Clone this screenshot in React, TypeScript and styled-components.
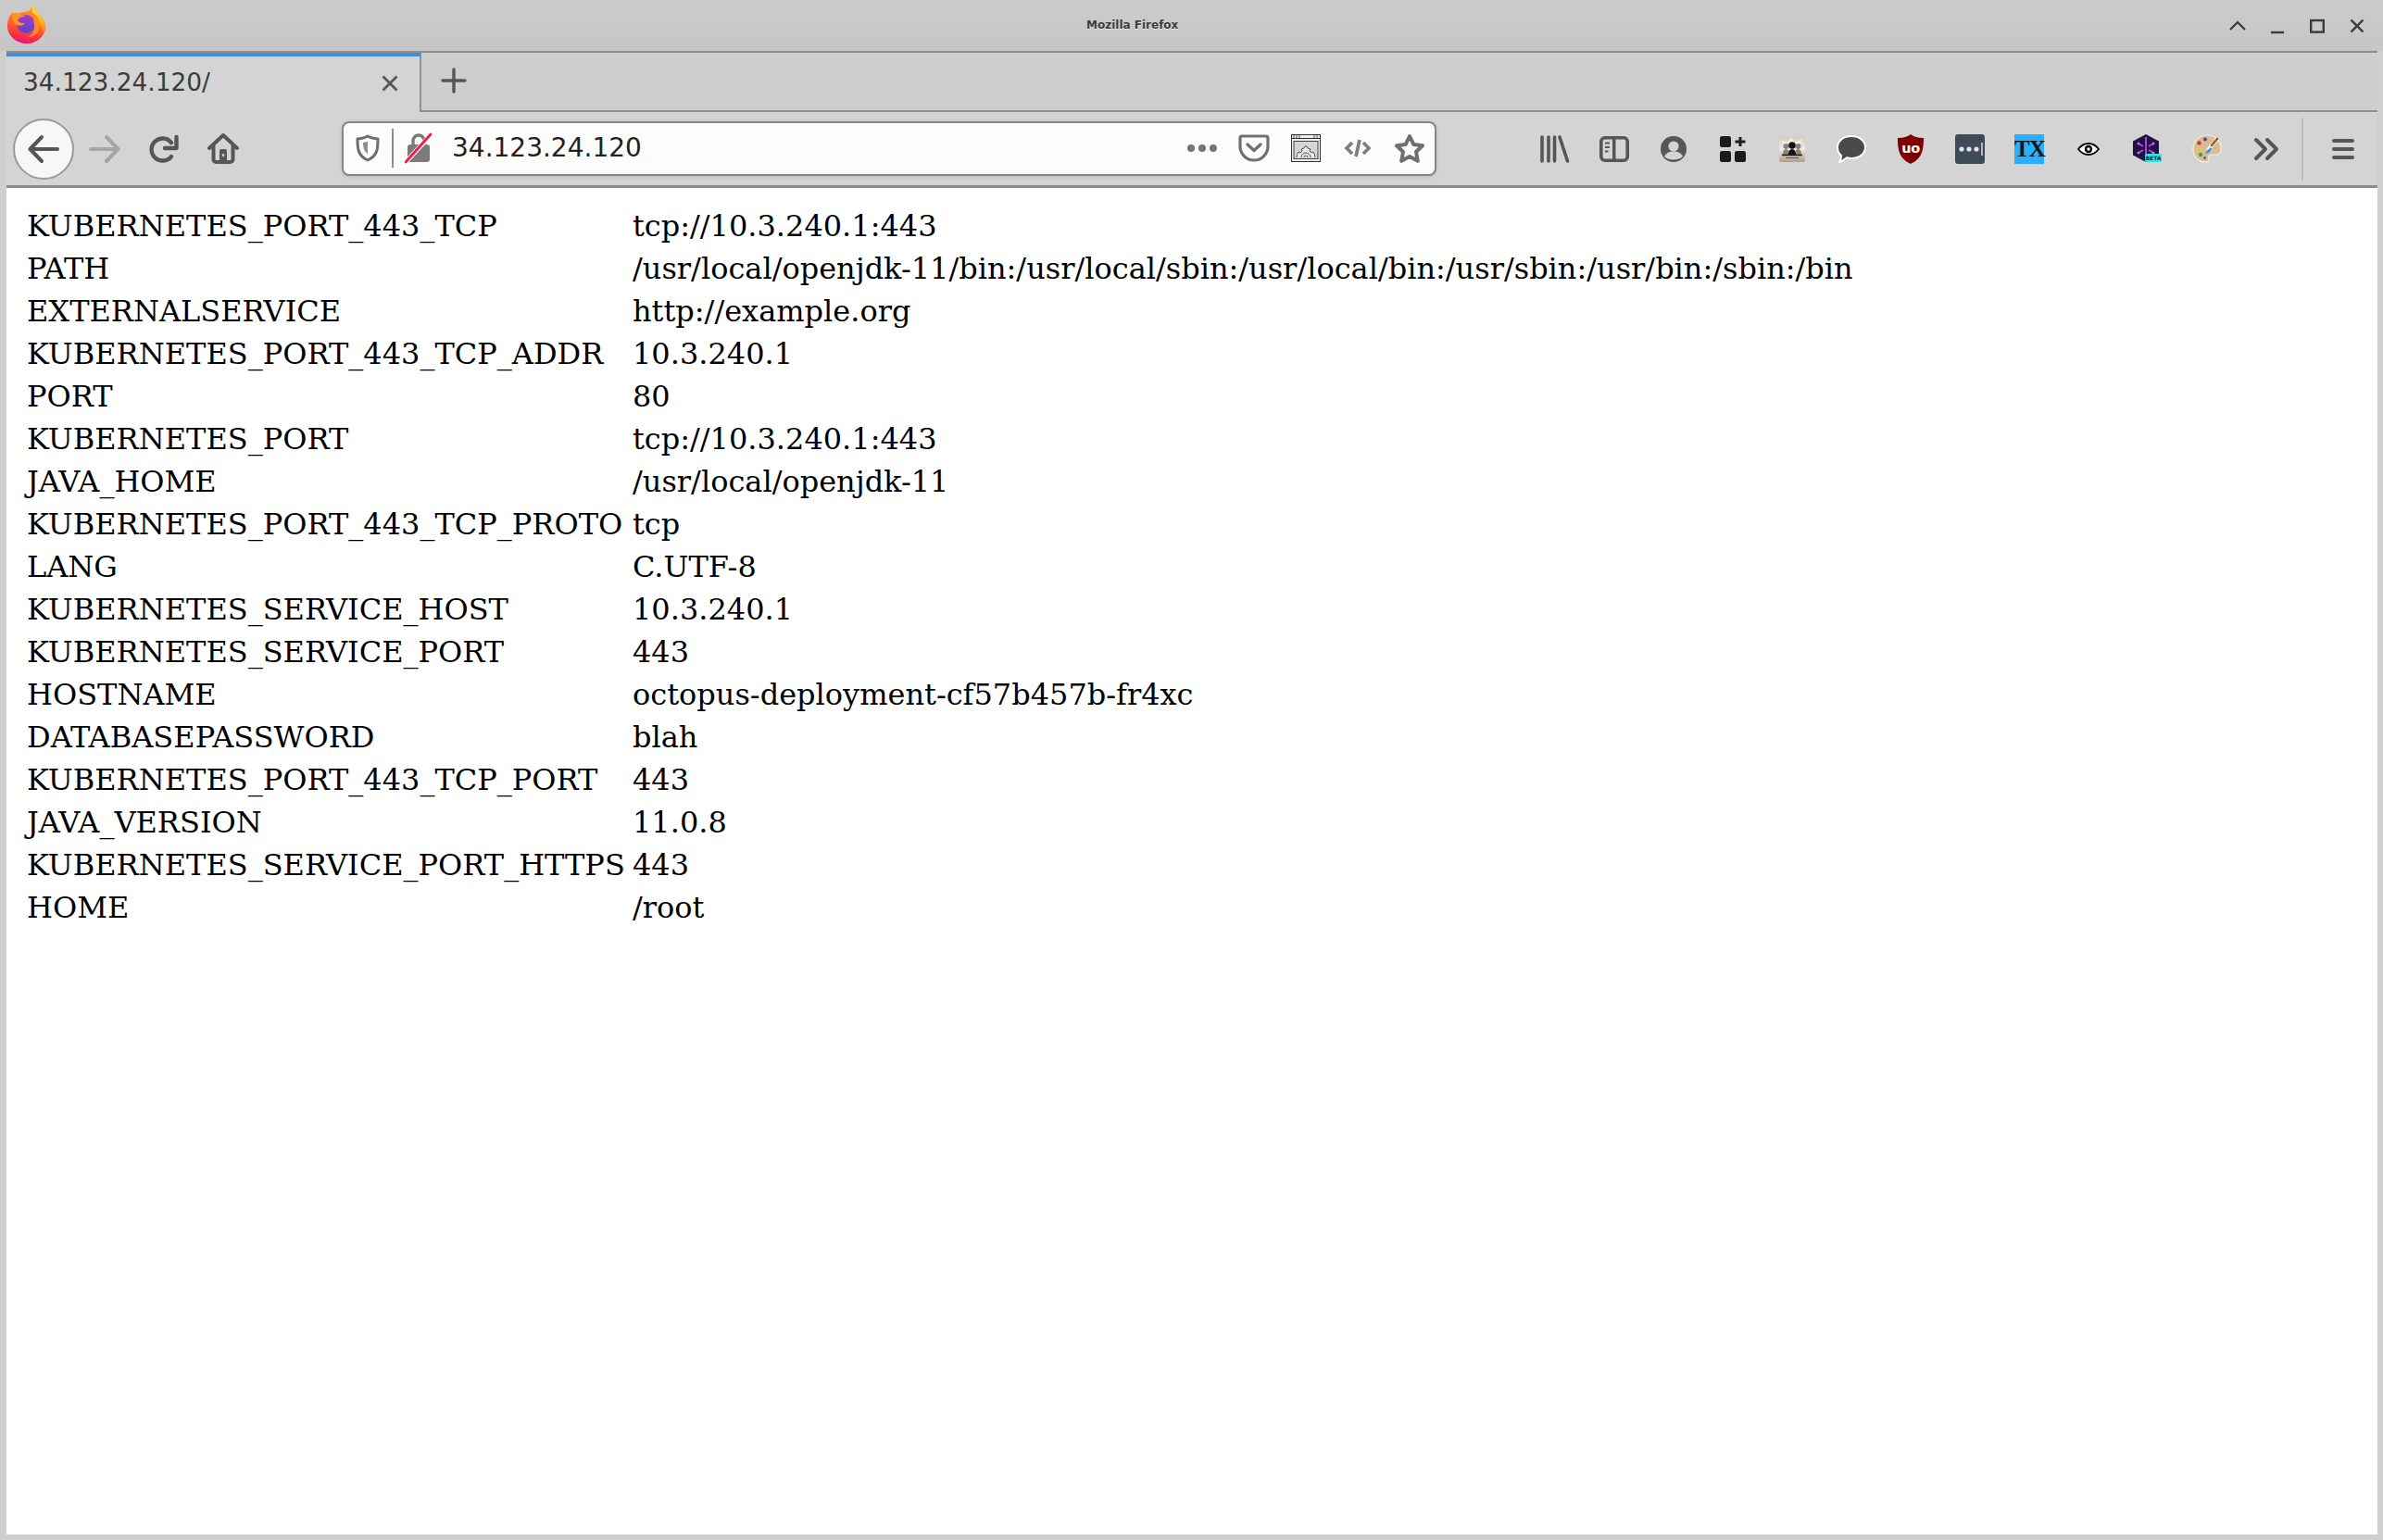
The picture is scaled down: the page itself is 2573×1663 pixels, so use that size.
import React from "react";
import styled, { createGlobalStyle } from "styled-components";

const GlobalStyle = createGlobalStyle`
  html, body { margin: 0; padding: 0; }
  body { background: #cfcfcf; }
  #root { width: 2573px; height: 1663px; overflow: hidden; }
`;

const Window = styled.div`
  width: 2573px;
  height: 1663px;
  display: flex;
  flex-direction: column;
  background: #cfcfcf;
  font-family: "DejaVu Sans", sans-serif;
`;

const TitleBar = styled.header`
  height: 55px;
  flex: none;
  display: grid;
  grid-template-columns: 1173px auto 1fr;
  align-items: center;
  background: linear-gradient(#cbcbcb, #c6c6c6);
`;

const LogoSlot = styled.div`
  display: flex;
  align-items: center;
  padding: 0 0 4px 8px;
`;

const WindowTitle = styled.div`
  font-size: 12px;
  font-weight: 700;
  color: #3c3c3c;
  text-shadow: 0 1px 0 #e8e8e8;
  padding-bottom: 1px;
`;

const WindowControls = styled.div`
  display: flex;
  justify-content: flex-end;
  padding-right: 7px;
`;

const WindowButton = styled.div`
  width: 43px;
  height: 44px;
  display: flex;
  align-items: center;
  justify-content: center;
  svg { width: 18px; height: 18px; }
`;

const Chrome = styled.div`
  flex: none;
  margin: 0 6px 0 7px;
`;

const TabStrip = styled.div`
  height: 66px;
  display: flex;
  background: #cecece;
  border-top: 2px solid #8e8e8e;
  box-sizing: border-box;
`;

const Tab = styled.div`
  width: 448px;
  flex: none;
  box-sizing: border-box;
  display: flex;
  align-items: center;
  justify-content: space-between;
  padding: 0 22px 2px 18px;
  background: #d4d4d4;
  border-top: 4px solid #3f8ce0;
  border-right: 2px solid #919191;
  font-size: 26.4px;
  color: #3b3b3b;
`;

const TabLabel = styled.span`
  padding-bottom: 4px;
`;

const TabSpace = styled.div`
  flex: 1;
  display: flex;
  align-items: center;
  padding: 0 0 2px 21px;
  border-bottom: 2px solid #919191;
`;

const Toolbar = styled.div`
  height: 82px;
  box-sizing: border-box;
  display: flex;
  align-items: center;
  background: #d4d4d4;
  border-bottom: 3px solid #8b8b8b;
`;

const NavGroup = styled.div`
  display: flex;
  align-items: center;
  width: 362px;
  flex: none;
  padding-left: 7px;
  box-sizing: border-box;
`;

const BackButton = styled.div`
  width: 66px;
  height: 66px;
  flex: none;
  box-sizing: border-box;
  border-radius: 50%;
  border: 2px solid #9a9a9a;
  background: #f7f7f7;
  display: flex;
  align-items: center;
  justify-content: center;
  margin-right: 1px;
`;

const NavButton = styled.div`
  width: 64px;
  height: 64px;
  flex: none;
  display: flex;
  align-items: center;
  justify-content: center;
`;

const UrlBar = styled.div`
  width: 1182px;
  height: 59px;
  flex: none;
  box-sizing: border-box;
  display: flex;
  align-items: center;
  background: #fcfcfc;
  border: 2px solid #858585;
  border-radius: 8px;
  box-shadow: 0 1px 4px rgba(0, 0, 0, 0.12);
  margin-top: -1px;
  padding-left: 13px;
`;

const UrlDivider = styled.div`
  width: 2px;
  height: 42px;
  background: #8c8c8c;
  margin: 0 12px 0 13px;
  flex: none;
`;

const UrlText = styled.div`
  flex: 1;
  padding-left: 21px;
  font-size: 28px;
  color: #222;
  line-height: 1;
`;

const UrlActions = styled.div`
  display: flex;
  align-items: center;
  margin-right: -1px;
`;

const UrlAction = styled.div`
  width: 56px;
  height: 40px;
  display: flex;
  align-items: center;
  justify-content: center;
`;

const ToolIcons = styled.div`
  display: flex;
  align-items: center;
  padding-left: 96px;
`;

const ToolIcon = styled.div`
  width: 64px;
  height: 64px;
  flex: none;
  display: flex;
  align-items: center;
  justify-content: center;
`;

const ToolDivider = styled.div`
  width: 2px;
  height: 68px;
  margin: 0 11px 0 6px;
  background: #bdbdbd;
  flex: none;
`;

const Page = styled.main`
  flex: 1;
  margin: 0 6px 6px 7px;
  padding: 18px 0 0 22px;
  background: #fff;
`;

const EnvTable = styled.table`
  border-collapse: collapse;
  table-layout: fixed;
  width: 2000px;
  font-family: "DejaVu Serif", serif;
  font-size: 32px;
  color: #000;
`;

const KeyCell = styled.td`
  width: 654px;
  height: 46px;
  padding: 0;
  white-space: nowrap;
  line-height: 46px;
`;

const ValueCell = styled.td`
  height: 46px;
  padding: 0;
  white-space: nowrap;
  line-height: 46px;
`;

const rows: [string, string][] = [
  ["KUBERNETES_PORT_443_TCP", "tcp://10.3.240.1:443"],
  ["PATH", "/usr/local/openjdk-11/bin:/usr/local/sbin:/usr/local/bin:/usr/sbin:/usr/bin:/sbin:/bin"],
  ["EXTERNALSERVICE", "http://example.org"],
  ["KUBERNETES_PORT_443_TCP_ADDR", "10.3.240.1"],
  ["PORT", "80"],
  ["KUBERNETES_PORT", "tcp://10.3.240.1:443"],
  ["JAVA_HOME", "/usr/local/openjdk-11"],
  ["KUBERNETES_PORT_443_TCP_PROTO", "tcp"],
  ["LANG", "C.UTF-8"],
  ["KUBERNETES_SERVICE_HOST", "10.3.240.1"],
  ["KUBERNETES_SERVICE_PORT", "443"],
  ["HOSTNAME", "octopus-deployment-cf57b457b-fr4xc"],
  ["DATABASEPASSWORD", "blah"],
  ["KUBERNETES_PORT_443_TCP_PORT", "443"],
  ["JAVA_VERSION", "11.0.8"],
  ["KUBERNETES_SERVICE_PORT_HTTPS", "443"],
  ["HOME", "/root"],
];

const FirefoxLogo = () => (
  <svg width="42" height="44" viewBox="0 0 42 44">
    <defs>
      <linearGradient id="ffBody" x1="0.6" y1="0.1" x2="0.4" y2="1">
        <stop offset="0" stopColor="#ff9a1e" />
        <stop offset="0.55" stopColor="#ff5a2c" />
        <stop offset="0.85" stopColor="#f5264f" />
        <stop offset="1" stopColor="#e8158c" />
      </linearGradient>
      <linearGradient id="ffFlame" x1="0.4" y1="0" x2="0.6" y2="1">
        <stop offset="0" stopColor="#ffe23a" />
        <stop offset="0.6" stopColor="#ffb81f" />
        <stop offset="1" stopColor="#ff7a1e" />
      </linearGradient>
      <linearGradient id="ffGlobe" x1="0.5" y1="0" x2="0.5" y2="1">
        <stop offset="0" stopColor="#a83cc4" />
        <stop offset="1" stopColor="#5a44cc" />
      </linearGradient>
    </defs>
    <path d="M29 0c-1 4 0 7 3 10 4 4 9 8 9 15 0 10-9 18-20 18S0 35 0 24C0 18 2 13 5 10c0 3 1 4 2 5 3-4 7-6 11-6 5 0 9-4 11-9z" fill="url(#ffBody)" />
    <path d="M29 0c-1 4 0 7 3 10 4 4 9 8 9 15 0 3-1 6-2 8-1-8-5-13-10-16-3-5-3-12 0-17z" fill="url(#ffFlame)" />
    <circle cx="20" cy="22" r="10" fill="url(#ffGlobe)" />
    <path d="M5 10c4-1 10 0 14 4-4 0-7 1-8 4 2 3 6 3 8 3-2 3-6 3-9 2C7 21 4 16 5 10z" fill="#ff9426" />
    <path d="M25 9c6 2 10 7 10 14 0 8-6 13-13 13 5-2 8-7 7-13 0-5-2-10-4-14z" fill="#ff8a22" />
  </svg>
);

const Chevron = () => (
  <svg viewBox="0 0 18 18"><path d="M1 13 9 5l8 8" fill="none" stroke="#3a3a3a" strokeWidth="2.2" /></svg>
);
const Minimize = () => (
  <svg viewBox="0 0 18 18"><path d="M2 16h14" fill="none" stroke="#3a3a3a" strokeWidth="2.4" /></svg>
);
const Maximize = () => (
  <svg viewBox="0 0 18 18"><rect x="2.2" y="3" width="13.6" height="12.6" fill="none" stroke="#3a3a3a" strokeWidth="2.4" /></svg>
);
const CloseGlyph = () => (
  <svg viewBox="0 0 18 18"><path d="M2.5 2.5 15.5 15.5M15.5 2.5 2.5 15.5" fill="none" stroke="#3a3a3a" strokeWidth="2.4" /></svg>
);

const Arrow = ({ dir, color }: { dir: "left" | "right"; color: string }) => (
  <svg width="34" height="32" viewBox="0 0 34 32" style={dir === "right" ? { transform: "scaleX(-1)" } : undefined}>
    <path d="M15 3 2.5 16 15 29M3 16h29" fill="none" stroke={color} strokeWidth="4" strokeLinecap="round" strokeLinejoin="round" />
  </svg>
);

const Reload = () => (
  <svg width="34" height="34" viewBox="0 0 34 34">
    <path d="M25 10A12 12 0 1 0 25 25" fill="none" stroke="#565656" strokeWidth="4.4" strokeLinecap="round" />
    <path d="M30.500 4v12H18" fill="none" stroke="#565656" strokeWidth="4.4" strokeLinecap="round" strokeLinejoin="round" />
  </svg>
);

const HomeIcon = () => (
  <svg width="34" height="34" viewBox="0 0 34 34">
    <path d="M2 16 17 2l15 14M6.500 13v15a3 3 0 0 0 3 3h15a3 3 0 0 0 3-3V13" fill="none" stroke="#565656" strokeWidth="4" strokeLinecap="round" strokeLinejoin="round" />
    <rect x="13" y="17" width="8" height="14" rx="2" fill="#565656" />
    <rect x="15.800" y="22" width="2.400" height="3" fill="#c8c8c8" />
  </svg>
);

const ShieldIcon = () => (
  <svg width="26" height="30" viewBox="0 0 26 30">
    <path d="M13 2c3 2 7 2.600 11 3 0 10 0 18-11 23C2 23 2 15 2 5c4-.4 8-1 11-3z" fill="none" stroke="#6d6d6d" strokeWidth="3" strokeLinejoin="round" />
    <path d="M13 8v13c-3-2-5-5-5-12z" fill="#8d8d8d" />
  </svg>
);

const InsecureLock = () => (
  <svg width="30" height="34" viewBox="0 0 30 34">
    <path d="M9 14V9a6 6 0 0 1 12 0v5" fill="none" stroke="#7b7b7b" strokeWidth="3.4" />
    <rect x="3" y="13" width="24" height="19" rx="3" fill="#7b7b7b" />
    <path d="M1 32 29 2" stroke="#fff" strokeWidth="5" />
    <path d="M1 32 28 2" stroke="#ef1b45" strokeWidth="2.8" strokeLinecap="round" />
  </svg>
);

const DotsIcon = () => (
  <svg width="34" height="10" viewBox="0 0 34 10">
    <circle cx="5" cy="5" r="4" fill="#757575" />
    <circle cx="17" cy="5" r="4" fill="#757575" />
    <circle cx="29" cy="5" r="4" fill="#757575" />
  </svg>
);

const PocketIcon = () => (
  <svg width="34" height="30" viewBox="0 0 34 30">
    <path d="M4 2h26a2 2 0 0 1 2 2v9a15 15 0 0 1-30 0V4a2 2 0 0 1 2-2z" fill="none" stroke="#707070" strokeWidth="3.2" />
    <path d="M10 11l7 6.500 7-6.500" fill="none" stroke="#707070" strokeWidth="3.4" strokeLinecap="round" strokeLinejoin="round" />
  </svg>
);

const GearWindow = () => (
  <svg width="32" height="30" viewBox="0 0 32 30">
    <rect x=".5" y=".5" width="31" height="29" fill="#eee" stroke="#333" />
    <path d="M1 4.500h30" stroke="#333" />
    <path d="M3 1v3M6 1v3M9 1v3M25 1v3M28 1v3" stroke="#555" />
    <rect x="3" y="7.500" width="26" height="19" fill="#d5d5d5" stroke="#444" />
    <path d="M6 25a10 10 0 0 1 2-6l2 1 2-2-1-2 3-1 1-2h2l1 2 3 1-1 2 2 2 2-1a10 10 0 0 1 2 6" fill="#e8e8e8" stroke="#555" />
    <path d="M11 25a5 5 0 0 1 10 0M14 25a2 2 0 0 1 4 0" fill="none" stroke="#555" />
  </svg>
);

const CodeIcon = () => (
  <svg width="30" height="22" viewBox="0 0 30 22">
    <path d="M9 5 3 11l6 6M21 5l6 6-6 6M17 2l-4 18" fill="none" stroke="#7d7d7d" strokeWidth="3.6" />
  </svg>
);

const StarIcon = () => (
  <svg width="34" height="33" viewBox="0 0 34 33">
    <path d="M17 3l4.300 9 9.700 1.300-7 6.700 1.800 9.800L17 25l-8.800 4.800L10 20l-7-6.700 9.700-1.300z" fill="none" stroke="#6e6e6e" strokeWidth="4" strokeLinejoin="round" />
  </svg>
);

const LibraryIcon = () => (
  <svg width="32" height="30" viewBox="0 0 32 30">
    <path d="M2 2v26M9 2v26M15.500 2v26M21 2l8.500 26" fill="none" stroke="#565656" strokeWidth="3.6" strokeLinecap="round" />
  </svg>
);

const SidebarIcon = () => (
  <svg width="32" height="28" viewBox="0 0 32 28">
    <rect x="1.800" y="1.800" width="28.400" height="24.400" rx="4" fill="none" stroke="#565656" strokeWidth="3.600" />
    <rect x="14" y="2" width="3.500" height="24" fill="#565656" />
    <path d="M6 7.500h5M6 12h5M6 16.500h3.500" stroke="#565656" strokeWidth="2.200" />
  </svg>
);

const AccountIcon = () => (
  <svg width="28" height="28" viewBox="0 0 28 28">
    <circle cx="14" cy="14" r="14" fill="#565656" />
    <circle cx="14" cy="11" r="5.600" fill="#d4d4d4" />
    <path d="M4 22c3-5 6-5.500 10-5.500S21 17 24 22c-3 2.600-6 3.500-10 3.500S7 24.600 4 22z" fill="#d4d4d4" />
  </svg>
);

const GridPlusIcon = () => (
  <svg width="28" height="28" viewBox="0 0 28 28">
    <rect width="12" height="12" rx="2.500" fill="#1b1b1b" />
    <rect y="16" width="12" height="12" rx="2.500" fill="#1b1b1b" />
    <rect x="16" y="16" width="12" height="12" rx="2.500" fill="#1b1b1b" />
    <path d="M22 1v10M16.500 6h11" stroke="#1b1b1b" strokeWidth="3" />
  </svg>
);

const PeopleIcon = () => (
  <svg width="28" height="28" viewBox="0 0 28 28">
    <defs>
      <linearGradient id="peopleBg" x1="0" y1="0" x2="0" y2="1">
        <stop offset="0" stopColor="#d8cabc" />
        <stop offset="0.5" stopColor="#f0ebe4" />
        <stop offset="1" stopColor="#b09e8e" />
      </linearGradient>
    </defs>
    <rect width="28" height="28" rx="2" fill="url(#peopleBg)" />
    <path d="M2 4l6 3 5-5 4 5 8-4-4 7H6z" fill="#f4f0ea" />
    <circle cx="7.500" cy="11" r="3" fill="#8c8178" />
    <circle cx="20.500" cy="11" r="3" fill="#8c8178" />
    <path d="M4 20c0-4 1.500-6 3.500-6s3.500 2 3.500 6zM17 20c0-4 1.500-6 3.500-6s3.500 2 3.500 6z" fill="#8c8178" />
    <circle cx="14" cy="10" r="3.800" fill="#111" />
    <path d="M10 20c0-4 1.500-6 4-6s4 2 4 6z" fill="#111" />
    <path d="M3 20.500h22" stroke="#222" strokeWidth="1.600" />
    <path d="M7 23.500h14" stroke="#5a5148" strokeWidth="1" />
  </svg>
);

const ChatIcon = () => (
  <svg width="34" height="32" viewBox="0 0 34 32">
    <path d="M17 2c8.500 0 15 5 15 12s-6.500 12-15 12c-2 0-3.500-.2-5-.7C10 27 7.500 29 4 30c1.500-2 2-4 2-7-2.500-2-4-5-4-9C2 7 8.500 2 17 2z" fill="#4a4a4a" stroke="#fff" strokeWidth="2" strokeLinejoin="round" />
  </svg>
);

const UBlockIcon = () => (
  <svg width="28" height="32" viewBox="0 0 28 32">
    <path d="M14 0c3 2.500 8 4 14 4 0 14-2 22-14 28C2 26 0 18 0 4c6 0 11-1.500 14-4z" fill="#800000" />
    <text x="14" y="19.500" textAnchor="middle" fontFamily="DejaVu Sans" fontWeight="700" fontSize="14.500" letterSpacing="-.5" fill="#fff">uo</text>
  </svg>
);

const PasswordIcon = () => (
  <svg width="32" height="32" viewBox="0 0 32 32">
    <rect width="32" height="32" rx="3" fill="#3d4b59" />
    <circle cx="7" cy="16" r="2.600" fill="#e6e6e6" />
    <circle cx="15" cy="16" r="2.600" fill="#e6e6e6" />
    <circle cx="23" cy="16" r="2.600" fill="#e6e6e6" />
    <path d="M29 9v14" stroke="#e6e6e6" strokeWidth="1.400" />
  </svg>
);

const TxBadge = styled.div`
  width: 32px;
  height: 32px;
  background: #2aaeff;
  color: #161616;
  font-family: "Liberation Serif", serif;
  font-weight: 700;
  font-size: 25px;
  line-height: 32px;
  text-align: center;
  letter-spacing: -1px;
`;

const EyeIcon = () => (
  <svg width="24" height="14" viewBox="0 0 24 14">
    <path d="M1 7c3-4 7-6 11-6s8 2 11 6c-3 4-7 6-11 6S4 11 1 7z" fill="#fff" stroke="#000" strokeWidth="1.800" />
    <circle cx="12" cy="7" r="4.200" fill="#000" />
    <circle cx="12" cy="7" r="1.700" fill="#fff" />
  </svg>
);

const HexIcon = () => (
  <svg width="32" height="32" viewBox="0 0 32 32">
    <path d="M14 0l14 7.500v15L14 30 0 22.500v-15z" fill="#251040" />
    <path d="M14 3v24M6 10l5 3M22 10l-5 3M6 20l5-3M22 20l-5-3" stroke="#b04ef0" strokeWidth="1.800" />
    <circle cx="6" cy="10" r="1.500" fill="#c566ff" />
    <circle cx="22" cy="10" r="1.500" fill="#c566ff" />
    <circle cx="6" cy="20" r="1.500" fill="#c566ff" />
    <circle cx="22" cy="20" r="1.500" fill="#c566ff" />
    <rect x="13" y="21" width="18" height="9" rx="1.500" fill="#2fe6dc" />
    <text x="22" y="28.300" textAnchor="middle" fontFamily="DejaVu Sans" fontWeight="700" fontSize="6" fill="#123">BETA</text>
  </svg>
);

const PaletteIcon = () => (
  <svg width="32" height="32" viewBox="0 0 32 32">
    <path d="M16 1C7 1 1 8 1 16c0 8 6 14 13 14 4 0 5-2 4-4s0-4 3-4h5c3 0 5-2 5-6C31 7 25 1 16 1z" fill="#d9bc91" stroke="#eee" strokeWidth="1.200" />
    <circle cx="14" cy="5.500" r="2" fill="#3b4cc0" />
    <circle cx="7.500" cy="9.500" r="2.200" fill="#c83a2e" />
    <circle cx="5" cy="16" r="2" fill="#e8c63a" />
    <circle cx="9" cy="22" r="2.200" fill="#3fa83a" />
    <circle cx="13.500" cy="25.500" r="1.400" fill="#7a3fa0" />
    <path d="M27 5 17 17" stroke="#fff" strokeWidth="4" />
    <path d="M27 5 21 12" stroke="#8a5a2c" strokeWidth="2.600" strokeLinecap="round" />
    <path d="M20 14l-4 4-2 3 4-1 3-4z" fill="#2f8de0" />
  </svg>
);

const OverflowIcon = () => (
  <svg width="28" height="26" viewBox="0 0 28 26">
    <path d="M3 3l10 10L3 23M15 3l10 10-10 10" fill="none" stroke="#565656" strokeWidth="4" strokeLinecap="round" strokeLinejoin="round" />
  </svg>
);

const MenuIcon = () => (
  <svg width="24" height="24" viewBox="0 0 24 24">
    <path d="M2 3h20M2 12h20M2 21h20" stroke="#565656" strokeWidth="4" strokeLinecap="round" />
  </svg>
);

const TabClose = () => (
  <svg width="20" height="20" viewBox="0 0 20 20">
    <path d="M2.500 2.500l15 15M17.500 2.500l-15 15" stroke="#555" strokeWidth="2.800" />
  </svg>
);

const NewTab = () => (
  <svg width="28" height="28" viewBox="0 0 28 28">
    <path d="M14 2v24M2 14h24" stroke="#555" strokeWidth="3.400" strokeLinecap="round" />
  </svg>
);

const tools = [
  <LibraryIcon />, <SidebarIcon />, <AccountIcon />, <GridPlusIcon />, <PeopleIcon />, <ChatIcon />, <UBlockIcon />,
  <PasswordIcon />, <TxBadge>TX</TxBadge>, <EyeIcon />, <HexIcon />, <PaletteIcon />, <OverflowIcon />,
];

export default function App() {
  return (
    <Window>
      <GlobalStyle />
      <TitleBar>
        <LogoSlot><FirefoxLogo /></LogoSlot>
        <WindowTitle>Mozilla Firefox</WindowTitle>
        <WindowControls>
          <WindowButton><Chevron /></WindowButton>
          <WindowButton><Minimize /></WindowButton>
          <WindowButton><Maximize /></WindowButton>
          <WindowButton><CloseGlyph /></WindowButton>
        </WindowControls>
      </TitleBar>
      <Chrome>
        <TabStrip>
          <Tab>
            <TabLabel>34.123.24.120/</TabLabel>
            <TabClose />
          </Tab>
          <TabSpace><NewTab /></TabSpace>
        </TabStrip>
        <Toolbar>
          <NavGroup>
            <BackButton><Arrow dir="left" color="#565656" /></BackButton>
            <NavButton><Arrow dir="right" color="#a5a5a5" /></NavButton>
            <NavButton><Reload /></NavButton>
            <NavButton><HomeIcon /></NavButton>
          </NavGroup>
          <UrlBar>
            <ShieldIcon />
            <UrlDivider />
            <InsecureLock />
            <UrlText>34.123.24.120</UrlText>
            <UrlActions>
              <UrlAction><DotsIcon /></UrlAction>
              <UrlAction><PocketIcon /></UrlAction>
              <UrlAction><GearWindow /></UrlAction>
              <UrlAction><CodeIcon /></UrlAction>
              <UrlAction><StarIcon /></UrlAction>
            </UrlActions>
          </UrlBar>
          <ToolIcons>
            {tools.map((icon, i) => <ToolIcon key={i}>{icon}</ToolIcon>)}
            <ToolDivider />
            <ToolIcon><MenuIcon /></ToolIcon>
          </ToolIcons>
        </Toolbar>
      </Chrome>
      <Page>
        <EnvTable>
          <tbody>
            {rows.map(([key, value]) => (
              <tr key={key}>
                <KeyCell>{key}</KeyCell>
                <ValueCell>{value}</ValueCell>
              </tr>
            ))}
          </tbody>
        </EnvTable>
      </Page>
    </Window>
  );
}
